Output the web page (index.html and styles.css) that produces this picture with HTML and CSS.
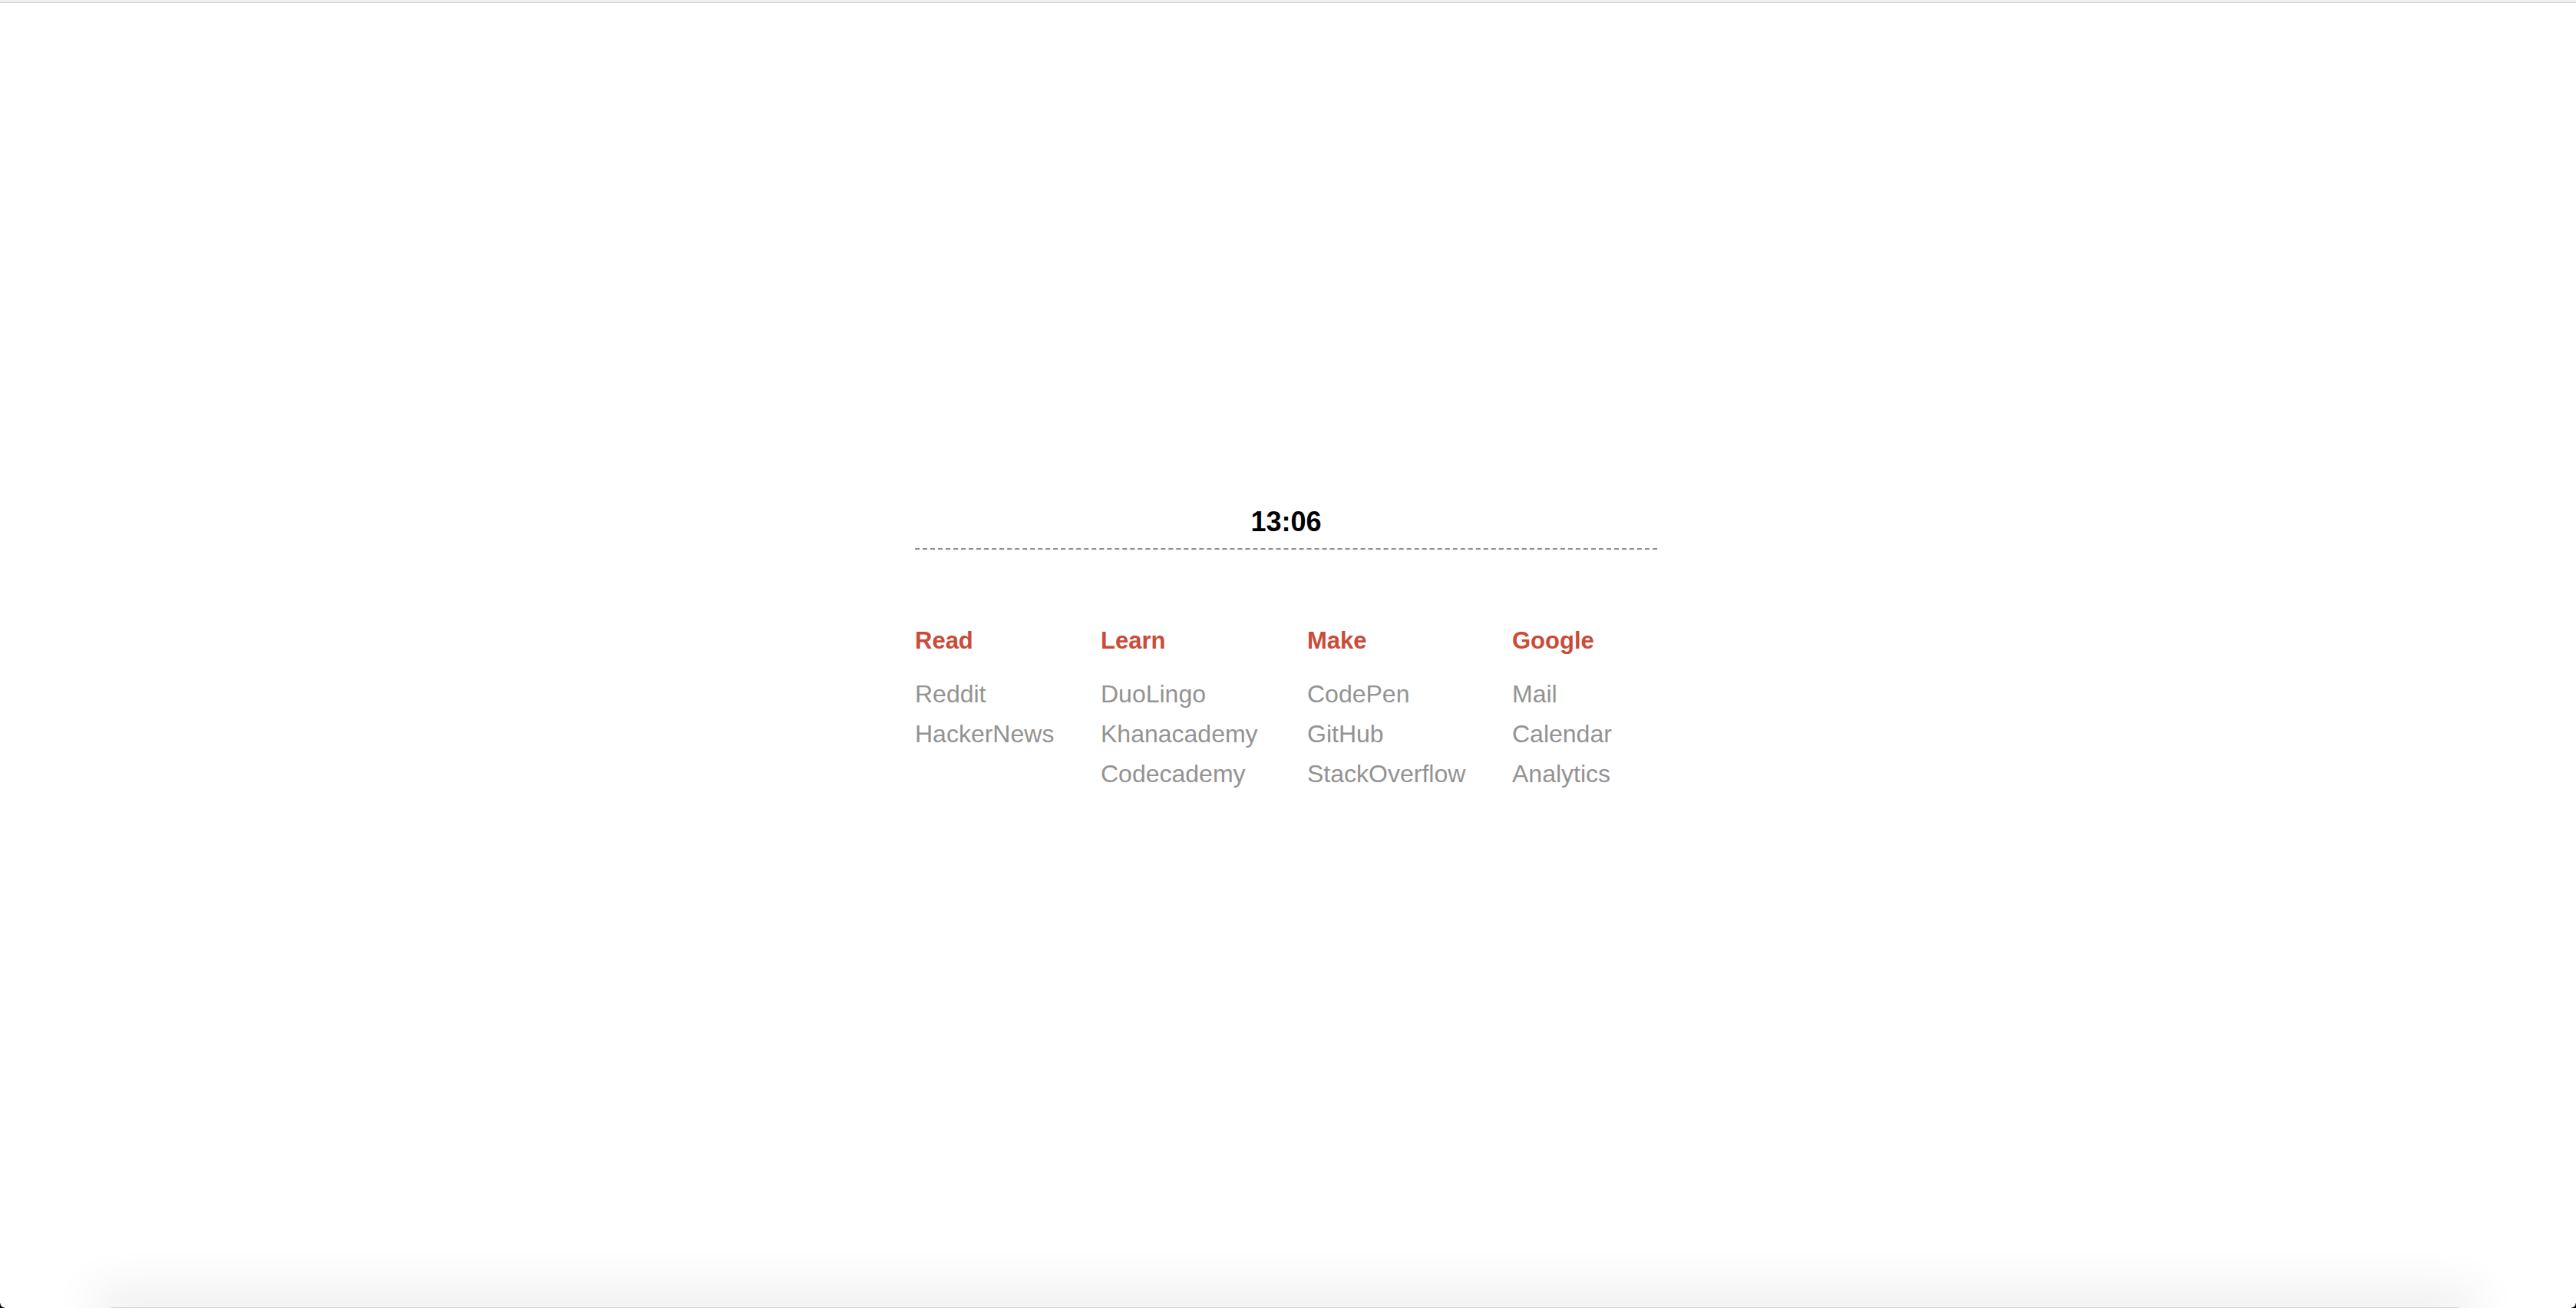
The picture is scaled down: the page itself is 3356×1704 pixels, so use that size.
FILE: index.html
```html
<!DOCTYPE html>
<html lang="en">
<head>
<meta charset="utf-8">
<title>Start</title>
<link rel="stylesheet" href="styles.css">
</head>
<body>
<div class="topbar"></div>
<main class="page">
  <section class="panel">
    <div class="clock">13:06</div>
    <div class="columns">
      <div class="col col-read">
        <h2 class="heading">Read</h2>
        <a class="link" href="#">Reddit</a>
        <a class="link" href="#">HackerNews</a>
      </div>
      <div class="col col-learn">
        <h2 class="heading">Learn</h2>
        <a class="link" href="#">DuoLingo</a>
        <a class="link" href="#">Khanacademy</a>
        <a class="link" href="#">Codecademy</a>
      </div>
      <div class="col col-make">
        <h2 class="heading">Make</h2>
        <a class="link" href="#">CodePen</a>
        <a class="link" href="#">GitHub</a>
        <a class="link" href="#">StackOverflow</a>
      </div>
      <div class="col col-google">
        <h2 class="heading">Google</h2>
        <a class="link" href="#">Mail</a>
        <a class="link" href="#">Calendar</a>
        <a class="link" href="#">Analytics</a>
      </div>
    </div>
  </section>
</main>
<div class="dock-shadow"></div>
<div class="corner corner-left"></div>
<div class="corner corner-right"></div>
</body>
</html>
```

FILE: styles.css
```css
html, body {
  margin: 0;
  padding: 0;
  background: #ffffff;
  height: 100%;
  overflow: hidden;
}

body {
  font-family: "Liberation Sans", Arial, Helvetica, sans-serif;
}

.topbar {
  height: 3px;
  background: #f0f0f0;
  border-bottom: 1px solid #d0d0d0;
}

.page {
  display: flex;
  justify-content: center;
  padding-top: 654px;
  padding-right: 5px;
}

.panel {
  width: 967px;
}

.clock {
  font-size: 36px;
  line-height: 43px;
  font-weight: bold;
  color: #000;
  text-align: center;
  padding-bottom: 13px;
  border-bottom: 2px dashed #8e8e8e;
  box-shadow: 0 1px 0 #f2f2f2;
}

.columns {
  display: flex;
  padding-top: 101px;
}

.col {
  display: flex;
  flex-direction: column;
}

.col-read { width: 242px; }
.col-learn { width: 269px; }
.col-make { width: 267px; }
.col-google { width: 189px; }

.heading {
  margin: 0 0 25px 0;
  font-size: 31px;
  line-height: 36px;
  font-weight: bold;
  color: #c94c39;
}

.link {
  font-size: 32px;
  line-height: 52px;
  color: #939393;
  text-decoration: none;
  white-space: nowrap;
}

.dock-shadow {
  position: fixed;
  left: 145px;
  right: 152px;
  bottom: 0;
  height: 1px;
  background: #d6d6d6;
  box-shadow: 0 0 60px 24px rgba(0, 0, 0, 0.075);
}

.corner {
  position: fixed;
  bottom: 0;
  width: 6px;
  height: 6px;
}

.corner-left {
  left: 0;
  background: radial-gradient(circle at 100% 0%, transparent 5px, #000 6px);
}

.corner-right {
  right: 0;
  background: radial-gradient(circle at 0% 0%, transparent 5px, #000 6px);
}
```
